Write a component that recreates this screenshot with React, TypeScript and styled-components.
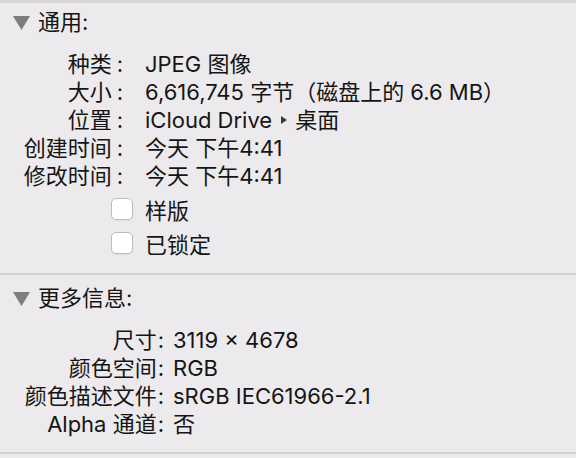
import React from 'react';
import styled, { createGlobalStyle } from 'styled-components';

const GlobalStyle = createGlobalStyle`
  html, body {
    margin: 0;
    padding: 0;
    background: #eceaec;
  }
  body {
    font-family: "Inter", "Noto Sans CJK SC", sans-serif;
    color: #151515;
    -webkit-font-smoothing: antialiased;
  }
`;

const general = [
    { label: '种类', value: 'JPEG 图像' },
    { label: '大小', value: '6,616,745 字节（磁盘上的 6.6 MB）' },
    { label: '位置', value: 'path' },
    { label: '创建时间', value: '今天 下午4:41' },
    { label: '修改时间', value: '今天 下午4:41' },
];

const moreInfo = [
    { label: '尺寸', value: '3119 × 4678' },
    { label: '颜色空间', value: 'RGB' },
    { label: '颜色描述文件', value: 'sRGB IEC61966-2.1' },
    { label: 'Alpha 通道', value: '否' },
];

const Disclosure = () => (
    <svg width="17" height="14" viewBox="0 0 17 14">
        <polygon points="0,0 17,0 8.5,14" fill="#7e7c7e" />
    </svg>
);

const PathArrow = () => (
    <svg width="6" height="8" viewBox="0 0 6 8">
        <polygon points="0,0 6,4 0,8" fill="#3a3a3a" />
    </svg>
);

export default function App() {
    return (
        <>
            <GlobalStyle />
            <Panel>
                <Section $top={5} $bottom={13}>
                    <SectionHeader>
                        <Disclosure />
                        <span>通用:</span>
                    </SectionHeader>
                    <InfoGrid $labelWidth={123} $gap={22}>
                        {general.map((row) => (
                            <React.Fragment key={row.label}>
                                <Label>{row.label}<Colon $space={5}>:</Colon></Label>
                                <Value>
                                    {row.value === 'path' ? (
                                        <>
                                            iCloud Drive
                                            <Crumb><PathArrow /></Crumb>
                                            桌面
                                        </>
                                    ) : row.value}
                                </Value>
                            </React.Fragment>
                        ))}
                    </InfoGrid>
                    <CheckList>
                        {['样版', '已锁定'].map((text) => (
                            <CheckRow key={text}>
                                <CheckBox />
                                <span>{text}</span>
                            </CheckRow>
                        ))}
                    </CheckList>
                </Section>
                <Section $top={9} $bottom={14}>
                    <SectionHeader>
                        <Disclosure />
                        <span>更多信息:</span>
                    </SectionHeader>
                    <InfoGrid $labelWidth={164} $gap={9}>
                        {moreInfo.map((row) => (
                            <React.Fragment key={row.label}>
                                <Label>{row.label}<Colon $space={1}>:</Colon></Label>
                                <Value>{row.value}</Value>
                            </React.Fragment>
                        ))}
                    </InfoGrid>
                </Section>
            </Panel>
        </>
    );
}

const Panel = styled.div`
  width: 576px;
  height: 458px;
  overflow: hidden;
  border-top: 3px solid #d7d5d7;
  box-sizing: border-box;
  font-size: 22px;
`;

const Section = styled.section<{ $top: number; $bottom: number }>`
  padding: ${(p) => p.$top}px 0 ${(p) => p.$bottom}px 0;
  border-bottom: 2px solid #d3d1d3;
`;

const SectionHeader = styled.div`
  display: flex;
  align-items: center;
  height: 28px;
  padding-left: 13px;
  gap: 8px;
  line-height: 28px;

  svg {
    margin-top: 1px;
  }
`;

const InfoGrid = styled.div<{ $labelWidth: number; $gap: number }>`
  display: grid;
  grid-template-columns: ${(p) => p.$labelWidth}px 1fr;
  column-gap: ${(p) => p.$gap}px;
  grid-auto-rows: 28px;
  margin-top: 14px;
  line-height: 28px;
  white-space: nowrap;
`;

const Label = styled.div`
  text-align: right;
`;

const Colon = styled.span<{ $space: number }>`
  margin-left: ${(p) => p.$space}px;
`;

const Value = styled.div`
  display: flex;
  align-items: center;
`;

const Crumb = styled.span`
  display: inline-flex;
  margin: 0 8px 0 9px;
`;

const CheckList = styled.div`
  margin-top: 2px;
`;

const CheckRow = styled.label`
  display: flex;
  align-items: center;
  height: 34px;
  padding-left: 111px;
  gap: 12px;
`;

const CheckBox = styled.span`
  display: inline-block;
  width: 20px;
  height: 20px;
  border: 1px solid #bdbbbd;
  border-radius: 5px;
  background: #ffffff;
  box-shadow: 0 1px 1px rgba(0, 0, 0, 0.06);
`;
